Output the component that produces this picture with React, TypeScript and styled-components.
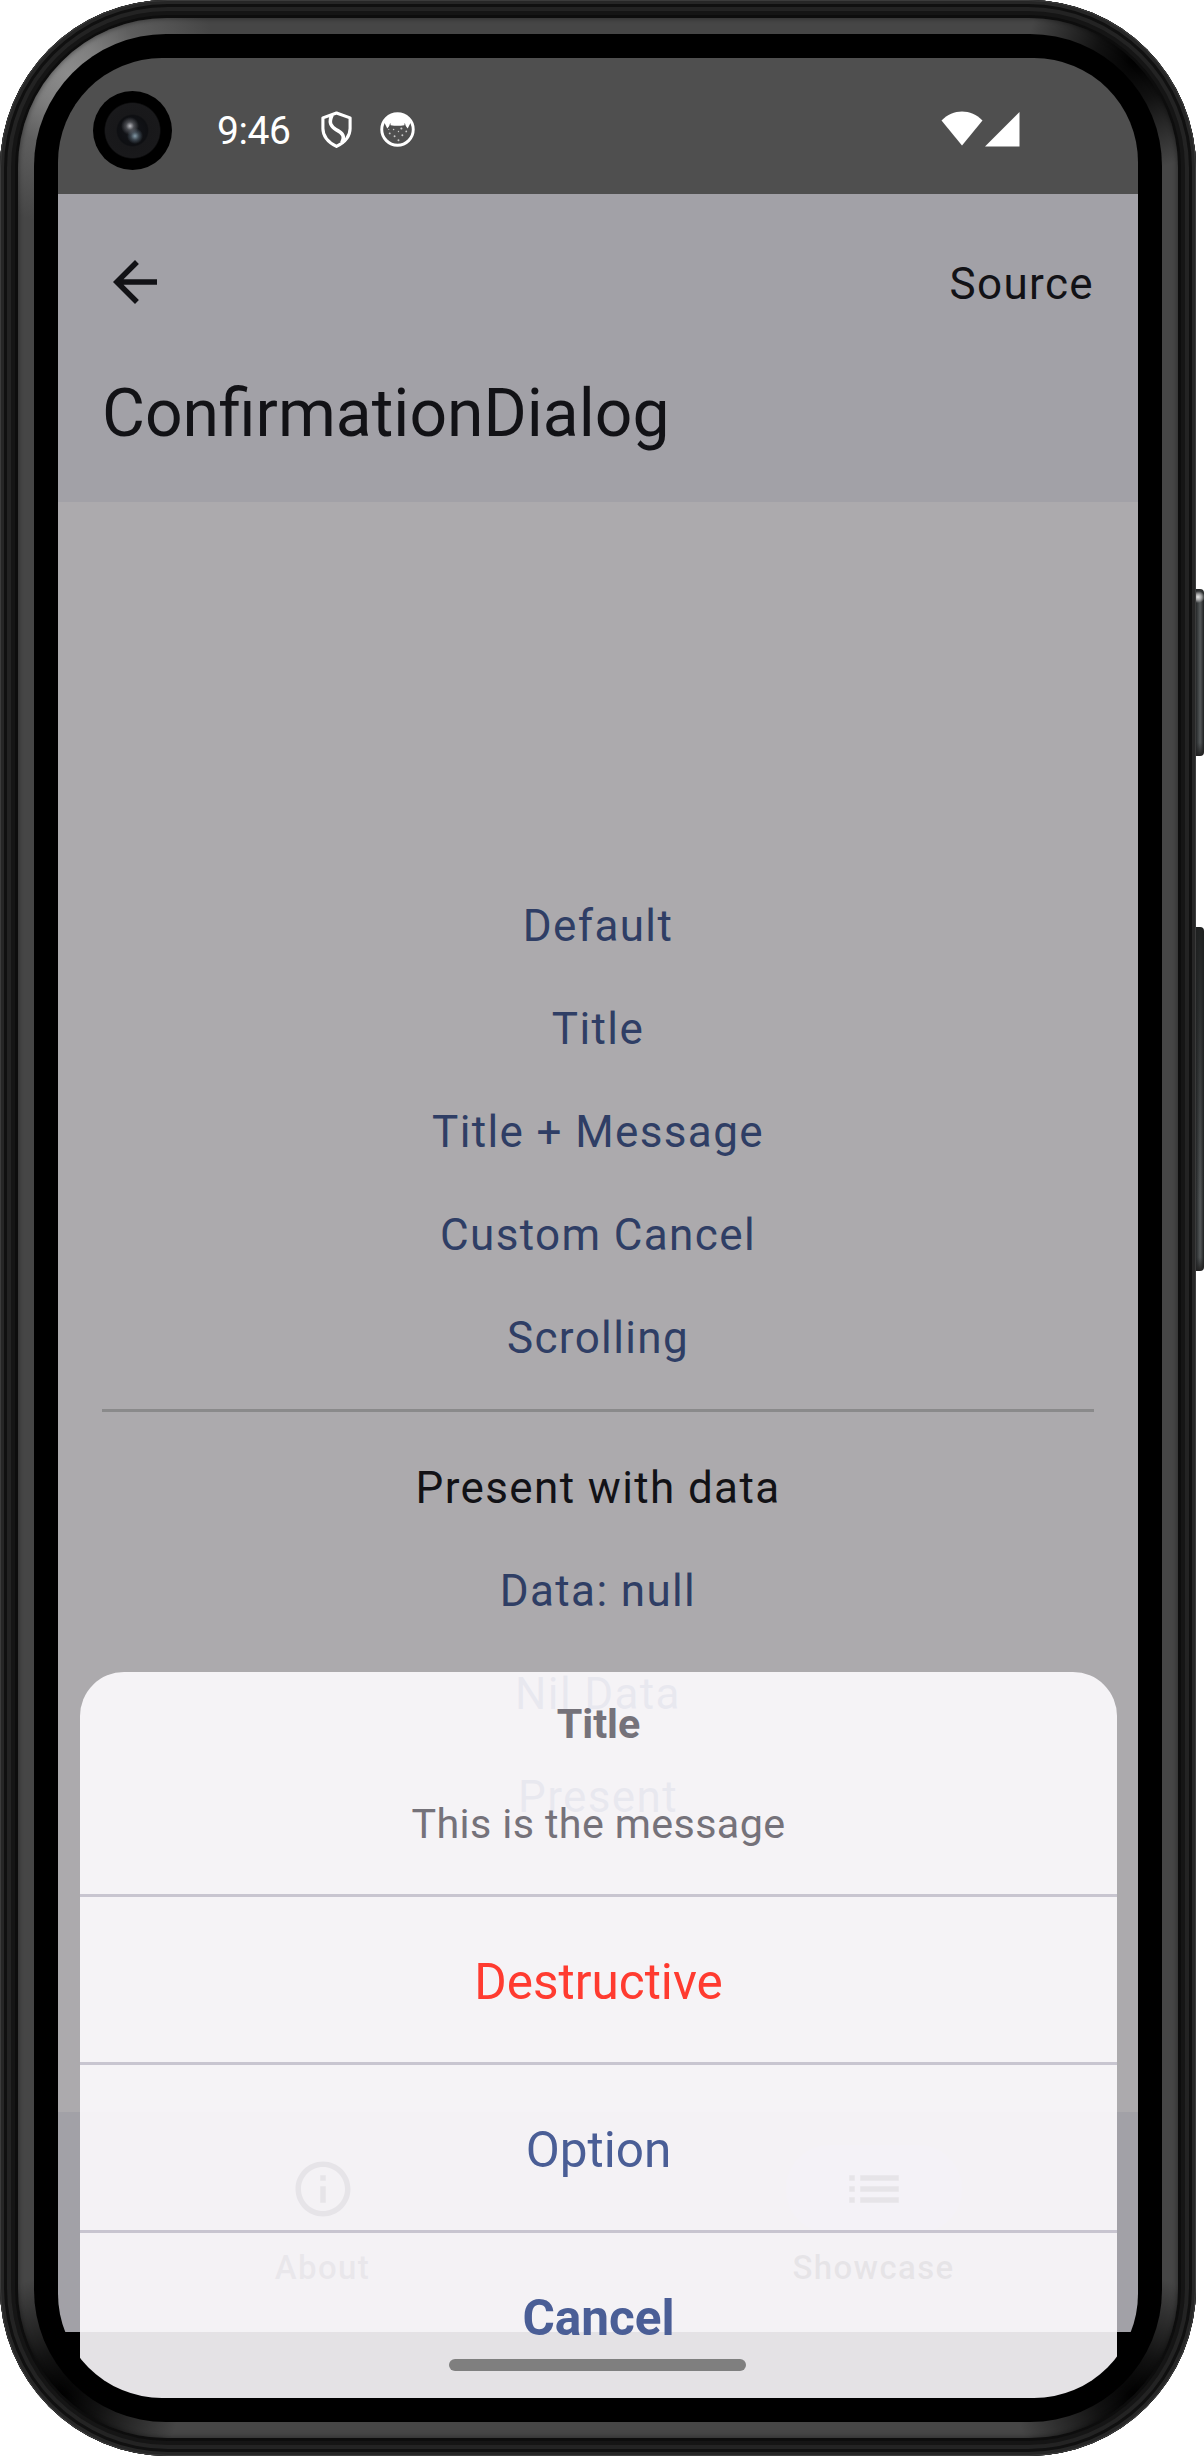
import React from "react";
import styled, { createGlobalStyle } from "styled-components";

const Global = createGlobalStyle`
  html, body { margin: 0; padding: 0; background: #fff; }
  * { box-sizing: border-box; }
`;

const Stage = styled.div`
  position: relative;
  width: 1204px;
  height: 2456px;
  background: #fff;
  font-family: Roboto, "Liberation Sans", sans-serif;
`;

const Shell = styled.div`
  position: relative;
  width: 1196px;
  height: 2456px;
  padding: 18px;
  border-radius: 168px;
  background: #0d0d0d;
  box-shadow:
    inset 0 0 0 1px #3b3b3b,
    inset 0 0 0 4px #262626,
    inset 0 0 0 7px #101010,
    inset 0 0 0 11px #232323,
    inset 0 0 0 15px #151515;
`;

const Rim = styled.div`
  width: 1160px;
  height: 2420px;
  padding: 16px;
  border-radius: 149px;
  background:
    radial-gradient(circle at 50px 56px, #8c8c8c 0, rgba(132, 132, 132, 0.9) 35px, rgba(110, 110, 110, 0.6) 75px, transparent 150px),
    radial-gradient(circle at 1118px 42px, #000 0, rgba(0, 0, 0, 0.75) 40px, transparent 110px),
    radial-gradient(circle at 42px 2378px, #000 0, rgba(0, 0, 0, 0.75) 40px, transparent 120px),
    radial-gradient(circle at 1118px 2378px, #000 0, rgba(0, 0, 0, 0.75) 40px, transparent 120px),
    #464646;
  box-shadow: inset 0 0 4px 1px rgba(0, 0, 0, 0.35);
`;

const Bezel = styled.div`
  width: 1128px;
  height: 2388px;
  padding: 24px;
  border-radius: 132px;
  background: #000;
`;

const Screen = styled.div`
  position: relative;
  display: flex;
  flex-direction: column;
  width: 1080px;
  height: 2340px;
  overflow: hidden;
  border-radius: 104px;
  background: #000;
`;

const StatusBar = styled.div`
  display: flex;
  align-items: center;
  flex: none;
  height: 136px;
  padding: 9px 0 0 35px;
  background: #4f4f4f;
`;

const Camera = styled.div`
  flex: none;
  width: 79px;
  height: 79px;
  border-radius: 50%;
  background:
    radial-gradient(circle at 37px 35px, rgba(215, 215, 220, 0.85) 0, rgba(130, 132, 138, 0.5) 4px, transparent 9px),
    radial-gradient(circle at 42px 45px, rgba(150, 175, 190, 0.85) 0, rgba(110, 130, 145, 0.45) 4px, transparent 8px),
    radial-gradient(circle at 50% 50%, #14161b 0, #0e0f12 15px, #18181a 16.5px, #19191b 27px, #000 28.5px);
`;

const Clock = styled.div`
  margin: 1px 0 0 45px;
  width: 75px;
  font-size: 39px;
  line-height: 46px;
  letter-spacing: -0.4px;
  color: #fff;
`;

const Glyph = styled.svg<{ $w: number; $h: number; $ml?: number; $mt?: number }>`
  display: block;
  flex: none;
  width: ${(p) => p.$w}px;
  height: ${(p) => p.$h}px;
  margin-left: ${(p) => p.$ml ?? 0}px;
  margin-top: ${(p) => p.$mt ?? 0}px;
`;

const AppBar = styled.div`
  flex: none;
  height: 308px;
  padding: 55px 44px 0;
  background: #a2a1a7;
  color: #121216;
`;

const AppBarRow = styled.div`
  display: flex;
  align-items: center;
  justify-content: space-between;
  height: 66px;
`;

const Action = styled.div`
  padding-top: 4px;
  font-size: 44px;
  line-height: 66px;
  letter-spacing: 1.375px;
`;

const Heading = styled.div`
  margin-top: 55px;
  font-size: 66px;
  line-height: 88px;
  white-space: nowrap;
`;

const Content = styled.div`
  display: flex;
  flex: none;
  flex-direction: column;
  align-items: center;
  height: 1610px;
  padding: 373px 44px 0;
  background: #acaaad;
`;

const Item = styled.div<{ $plain?: boolean }>`
  height: 103px;
  font-size: 44px;
  line-height: 103px;
  letter-spacing: 1.375px;
  color: ${(p) => (p.$plain ? "#121216" : "#2f3e65")};
`;

const Rule = styled.div`
  flex: none;
  width: 100%;
  height: 3px;
  margin: 19px 0 25px;
  background: #8a8a8b;
`;

const NavBar = styled.div`
  display: flex;
  flex: none;
  gap: 22px;
  height: 220px;
  background: #a2a1a7;
  color: #1c1c20;
`;

const Tab = styled.div`
  display: flex;
  flex: 1;
  flex-direction: column;
  align-items: center;
  padding-top: 33px;
`;

const Pill = styled.div<{ $on?: boolean }>`
  display: flex;
  align-items: center;
  justify-content: center;
  width: 176px;
  height: 88px;
  border-radius: 44px;
  background: ${(p) => (p.$on ? "#a09fb4" : "transparent")};
`;

const TabLabel = styled.div<{ $dim?: boolean }>`
  margin-top: 13px;
  font-size: 33px;
  line-height: 44px;
  font-weight: 500;
  letter-spacing: 1.375px;
  color: ${(p) => (p.$dim ? "#37363c" : "#17171b")};
`;

const Sheet = styled.div`
  position: absolute;
  left: 22px;
  right: 21px;
  bottom: 0;
  height: 726px;
  border-radius: 44px 44px 0 0;
  background: rgba(253, 251, 254, 0.9);
  text-align: center;
`;

const SheetHead = styled.div`
  height: 222px;
  padding-top: 24px;
  color: #75727a;
`;

const SheetTitle = styled.div`
  font-size: 41.25px;
  line-height: 56px;
  font-weight: 700;
`;

const SheetMessage = styled.div`
  margin-top: 44px;
  font-size: 41.25px;
  line-height: 56px;
  letter-spacing: 0.37px;
`;

const SheetButton = styled.div<{ $danger?: boolean; $bold?: boolean }>`
  height: 168px;
  padding-top: 3px;
  border-top: 3px solid #c8c5d0;
  font-size: 49.5px;
  line-height: 164px;
  font-weight: ${(p) => (p.$bold ? 700 : 400)};
  color: ${(p) => (p.$danger ? "#ff3b30" : "#4a5e96")};
`;

const HomeHandle = styled.div`
  position: absolute;
  left: 391px;
  bottom: 27px;
  width: 297px;
  height: 12px;
  border-radius: 6px;
  background: #7f7f7f;
`;

const keyMetal = "linear-gradient(90deg, #26292a 0, #535758 4px, #4a4d4e 5px, #1d1f20 8px)";

const SideKey = styled.div<{ $top: number; $h: number; $lit?: boolean }>`
  position: absolute;
  left: 1196px;
  top: ${(p) => p.$top}px;
  width: 8px;
  height: ${(p) => p.$h}px;
  border-radius: 0 4px 4px 0;
  background: ${(p) =>
    p.$lit
      ? `radial-gradient(ellipse 7px 6px at 2px 8px, #e8e8e8 0, rgba(200,200,200,.7) 50%, transparent 100%), linear-gradient(#2a2c2d 0, transparent 8px, transparent 92%, #222 100%), ${keyMetal}`
      : `linear-gradient(rgba(30,32,32,.95) 0, rgba(30,32,32,.7) 25%, transparent 80%, transparent 96%, #222 100%), ${keyMetal}`};
`;

const ShieldIcon = () => (
  <Glyph $w={33} $h={39} $ml={28} $mt={-3} viewBox="0 0 34 40">
    <g fill="none" stroke="#fff" strokeWidth="3.2" strokeLinejoin="round">
      <path d="M17 3 L31 8 V19 C31 26 26 33 17 37.5 C8 33 3 26 3 19 V8 Z" />
      <path d="M12.5 5 C8.5 13 11 17 17 20.5 C23.5 24 26 27 22.5 33.5" strokeWidth="3.8" />
    </g>
  </Glyph>
);

const FaceIcon = () => (
  <Glyph $w={35} $h={35} $ml={27} $mt={-3} viewBox="0 0 36 36">
    <circle cx="18" cy="18" r="16.2" fill="none" stroke="#fff" strokeWidth="3" />
    <path
      fill="#fff"
      d="M4 10 C10 0 26 0 32 10 L28.5 17 L26.5 14.5 L25.5 11 L25 13.5 C20 14.5 16 14.5 11 13.5 L10.5 11 L9.5 14.5 L7.5 17 Z"
    />
    <g fill="#c9c9c9">
      <circle cx="10" cy="22" r="1" />
      <circle cx="14" cy="18" r=".8" />
      <circle cx="15" cy="25" r="1" />
      <circle cx="19" cy="20" r=".7" />
      <circle cx="22" cy="17" r="1.1" />
      <circle cx="23" cy="24" r="1" />
      <circle cx="27" cy="20" r=".9" />
      <circle cx="19" cy="29" r="1" />
      <circle cx="9" cy="18" r=".6" />
    </g>
  </Glyph>
);

const Back = () => (
  <Glyph $w={66} $h={66} viewBox="0 0 24 24">
    <path fill="#121216" d="M20 11H7.83l5.59-5.59L12 4l-8 8 8 8 1.41-1.41L7.83 13H20v-2z" />
  </Glyph>
);

const InfoIcon = () => (
  <Glyph $w={66} $h={66} viewBox="0 0 24 24">
    <path
      fill="#1c1c20"
      d="M11 7h2v2h-2zm0 4h2v6h-2zm1-9C6.48 2 2 6.48 2 12s4.48 10 10 10 10-4.48 10-10S17.52 2 12 2zm0 18c-4.41 0-8-3.59-8-8s3.59-8 8-8 8 3.59 8 8-3.59 8-8 8z"
    />
  </Glyph>
);

const ListIcon = () => (
  <Glyph $w={66} $h={66} viewBox="0 0 24 24">
    <path
      fill="#1c1c20"
      d="M3 13h2v-2H3v2zm0 4h2v-2H3v2zm0-8h2V7H3v2zm4 4h14v-2H7v2zm0 4h14v-2H7v2zM7 7v2h14V7H7z"
    />
  </Glyph>
);

const links = ["Default", "Title", "Title + Message", "Custom Cancel", "Scrolling"];
const dataLinks = ["Data: null", "Nil Data", "Present"];

export default function App() {
  return (
    <>
      <Global />
      <Stage>
        <SideKey $top={589} $h={167} $lit />
        <SideKey $top={927} $h={344} />
        <Shell>
          <Rim>
            <Bezel>
              <Screen>
                <StatusBar>
                  <Camera />
                  <Clock>9:46</Clock>
                  <ShieldIcon />
                  <FaceIcon />
                  <Glyph $w={42} $h={35} $ml={526} $mt={-4} viewBox="0 0 42 35">
                    <path fill="#fff" d="M0.5 9.5 C12 -2.5 30 -2.5 41.5 9.5 L21 34.5 Z" />
                  </Glyph>
                  <Glyph $w={35} $h={35} $ml={2} $mt={-3} viewBox="0 0 35 35">
                    <path fill="#fff" d="M0 34.5 L34.5 0 V34.5 Z" />
                  </Glyph>
                </StatusBar>
                <AppBar>
                  <AppBarRow>
                    <Back />
                    <Action>Source</Action>
                  </AppBarRow>
                  <Heading>ConfirmationDialog</Heading>
                </AppBar>
                <Content>
                  {links.map((label) => (
                    <Item key={label}>{label}</Item>
                  ))}
                  <Rule />
                  <Item $plain>Present with data</Item>
                  {dataLinks.map((label) => (
                    <Item key={label}>{label}</Item>
                  ))}
                </Content>
                <NavBar>
                  <Tab>
                    <Pill>
                      <InfoIcon />
                    </Pill>
                    <TabLabel $dim>About</TabLabel>
                  </Tab>
                  <Tab>
                    <Pill $on>
                      <ListIcon />
                    </Pill>
                    <TabLabel>Showcase</TabLabel>
                  </Tab>
                </NavBar>
                <Sheet>
                  <SheetHead>
                    <SheetTitle>Title</SheetTitle>
                    <SheetMessage>This is the message</SheetMessage>
                  </SheetHead>
                  <SheetButton $danger>Destructive</SheetButton>
                  <SheetButton>Option</SheetButton>
                  <SheetButton $bold>Cancel</SheetButton>
                </Sheet>
                <HomeHandle />
              </Screen>
            </Bezel>
          </Rim>
        </Shell>
      </Stage>
    </>
  );
}
